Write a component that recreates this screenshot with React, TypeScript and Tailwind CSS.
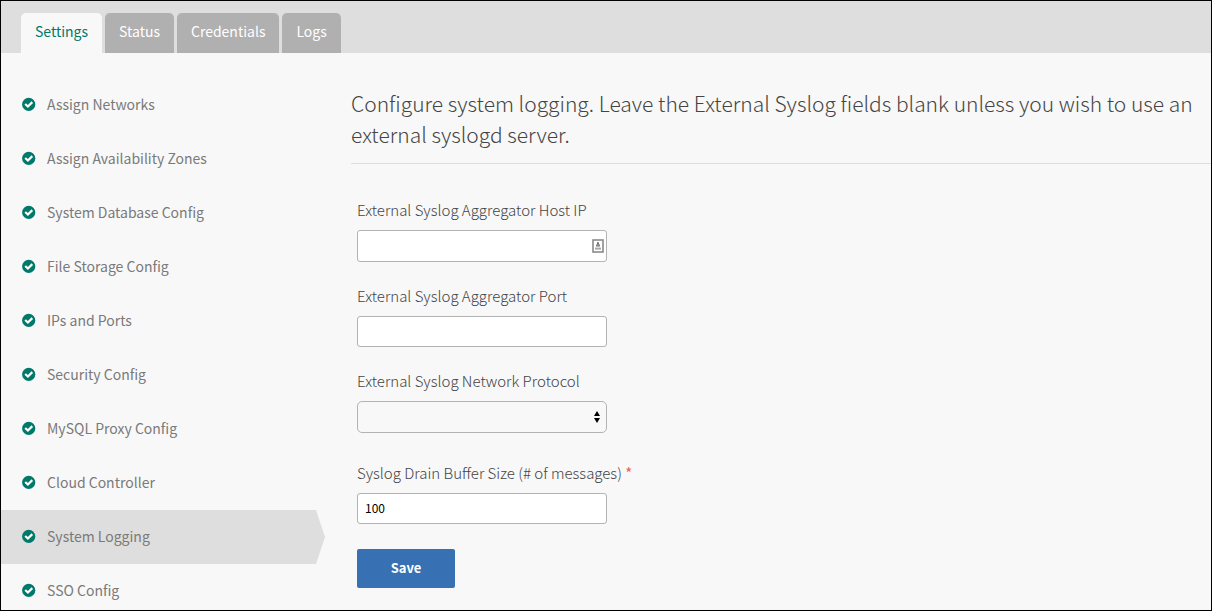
import type { ReactNode } from "react";

const tabs = ["Settings", "Status", "Credentials", "Logs"];

const sections = [
  "Assign Networks",
  "Assign Availability Zones",
  "System Database Config",
  "File Storage Config",
  "IPs and Ports",
  "Security Config",
  "MySQL Proxy Config",
  "Cloud Controller",
  "System Logging",
  "SSO Config",
];

const activeTab = "Settings";
const activeSection = "System Logging";

const inputClass =
  "block w-full rounded-[3px] border border-[#b3b3b3] bg-white px-[7px] pb-[3px] text-xs text-black outline-none";

function CheckIcon() {
  return (
    <svg viewBox="0 0 14 14" className="size-3.5 shrink-0" aria-hidden="true">
      <circle cx="6.7" cy="7.4" r="6.6" fill="#00796b" />
      <path d="M3.2 7 L5.9 9.5 L10.3 5.1" fill="none" stroke="#fff" strokeWidth="2.2" />
    </svg>
  );
}

function ContactIcon() {
  return (
    <svg viewBox="0 0 12 14" className="absolute top-[9px] right-[3px] h-3.5 w-3" aria-hidden="true">
      <rect x="1" y="1" width="10" height="12" fill="#fff" stroke="#8a8a8a" strokeWidth="1.6" />
      <rect x="5" y="3.2" width="2" height="2.6" fill="#777" />
      <rect x="4" y="5.4" width="4" height="2.2" fill="#888" />
      <rect x="3" y="8.6" width="6" height="2" fill="#a8a8a8" />
    </svg>
  );
}

function SortIcon() {
  return (
    <svg
      viewBox="0 0 6 12"
      className="pointer-events-none absolute top-2.5 right-[7px] h-3 w-1.5"
      aria-hidden="true"
    >
      <path d="M3 0 L6 5 H0 Z M0 7 H6 L3 12 Z" fill="#000" />
    </svg>
  );
}

function Field({ id, label, required, children }: { id: string; label: string; required?: boolean; children: ReactNode }) {
  return (
    <div className="flex flex-col gap-[9px]">
      <label htmlFor={id} className="text-[15px] leading-[22px] font-light whitespace-nowrap text-[#444]">
        {label}
        {required && <span className="font-normal text-[#f0604d]"> *</span>}
      </label>
      <div className="relative">{children}</div>
    </div>
  );
}

export default function App() {
  return (
    <div className="flex h-screen flex-col overflow-hidden border border-black bg-[#f8f8f8] font-['Noto_Sans_CJK_SC','Noto_Sans',sans-serif]">
      <nav className="flex shrink-0 gap-[3px] bg-[#dedede] px-5 pt-3">
        {tabs.map((tab) => (
          <a
            key={tab}
            href="#"
            className={`rounded-t-[5px] px-3.5 pt-1.5 pb-2.5 text-sm leading-6 ${
              tab === activeTab ? "bg-[#f8f8f8] text-[#00796b]" : "bg-[#b0b0b0] text-white"
            }`}
          >
            {tab}
          </a>
        ))}
      </nav>

      <div className="flex min-h-0 flex-1">
        <ul className="w-[324px] shrink-0 pt-[25px]">
          {sections.map((section) => (
            <li key={section}>
              <a
                href="#"
                className={`flex h-[54px] items-center gap-[11px] pb-0.5 pl-[21px] text-sm text-[#7a7a7a] ${
                  section === activeSection
                    ? "bg-[#dedede] [clip-path:polygon(0_0,315px_0,100%_50%,315px_100%,0_100%)]"
                    : ""
                }`}
              >
                <CheckIcon />
                {section}
              </a>
            </li>
          ))}
        </ul>

        <main className="ml-[26px] min-w-0 flex-1 pt-[35px]">
          <h1 className="border-b border-[#dedede] pb-[13px] text-[21px] leading-[31px] font-light text-[#444]">
            Configure system logging. Leave the External Syslog fields blank unless you wish to use an external
            syslogd server.
          </h1>
          <form className="ml-1.5 flex w-[250px] flex-col gap-[23px] pt-[35px]">
            <Field id="host" label="External Syslog Aggregator Host IP">
              <input id="host" type="text" className={`h-8 ${inputClass}`} />
              <ContactIcon />
            </Field>
            <Field id="port" label="External Syslog Aggregator Port">
              <input id="port" type="text" className={`h-[31px] ${inputClass}`} />
            </Field>
            <div className="mb-1.5">
              <Field id="protocol" label="External Syslog Network Protocol">
                <select
                  id="protocol"
                  className="block h-8 w-full appearance-none rounded-[5px] border border-[#b3b3b3] bg-[#f8f8f8] px-2 text-xs outline-none"
                >
                  <option value=""></option>
                  <option value="tcp">TCP</option>
                  <option value="udp">UDP</option>
                </select>
                <SortIcon />
              </Field>
            </div>
            <Field id="buffer" label="Syslog Drain Buffer Size (# of messages)" required>
              <input id="buffer" type="text" defaultValue="100" className={`h-[31px] ${inputClass}`} />
            </Field>
            <button
              type="button"
              className="mt-0.5 h-[39px] w-[98px] rounded-xs bg-[#3770b3] pb-0.5 text-[13px] font-bold text-white"
            >
              Save
            </button>
          </form>
        </main>
      </div>
    </div>
  );
}
